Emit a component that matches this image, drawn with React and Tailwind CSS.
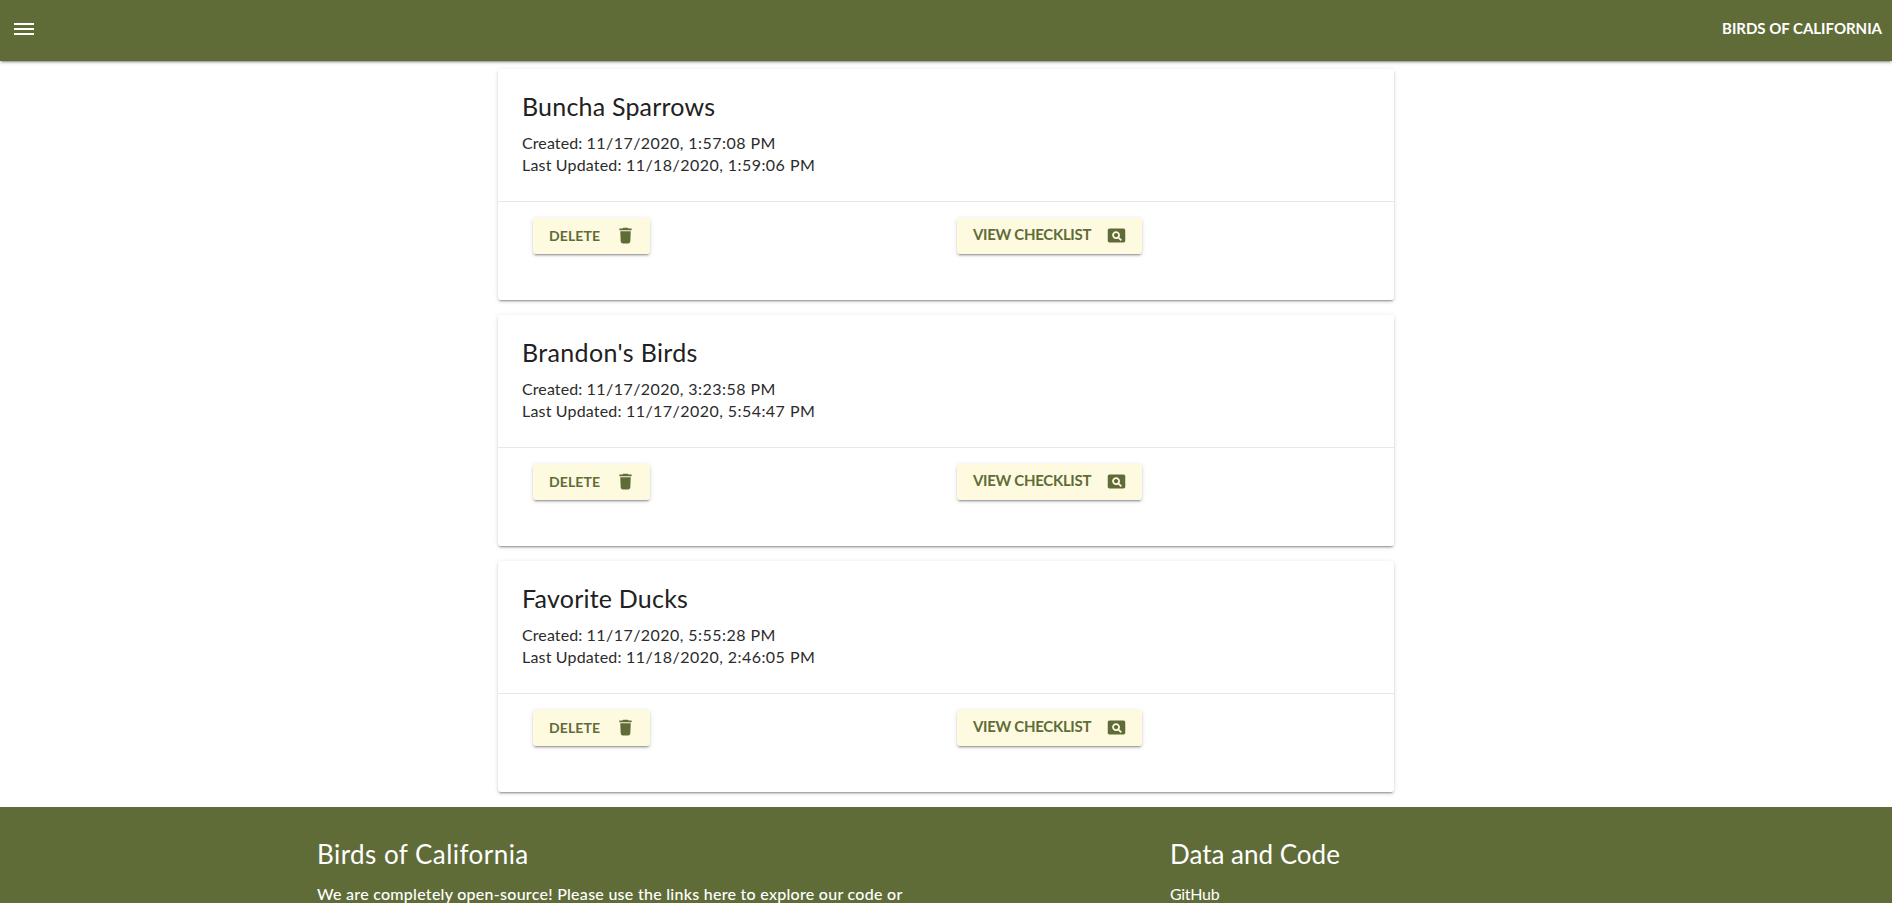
const checklists = [
  { name: "Buncha Sparrows", created: "11/17/2020, 1:57:08 PM", updated: "11/18/2020, 1:59:06 PM", tracking: "tracking-[0.2px]" },
  { name: "Brandon's Birds", created: "11/17/2020, 3:23:58 PM", updated: "11/17/2020, 5:54:47 PM", tracking: "tracking-[0.35px]" },
  { name: "Favorite Ducks", created: "11/17/2020, 5:55:28 PM", updated: "11/18/2020, 2:46:05 PM", tracking: "tracking-[0.22px]" },
];

const raised =
  "shadow-[0_3px_1px_-2px_rgba(0,0,0,0.2),0_2px_2px_0_rgba(0,0,0,0.14),0_1px_5px_0_rgba(0,0,0,0.12)]";

function Icon({ d, className }) {
  return (
    <svg viewBox="0 0 24 24" fill="currentColor" className={className}>
      <path d={d} />
    </svg>
  );
}

function Card({ name, created, updated, tracking }) {
  return (
    <article className={`h-[231px] rounded-[3px] bg-white ${raised}`}>
      <div className="h-[133px] border-b border-[#e8e8e8] pl-6 pt-[21px]">
        <h2 className={`text-[25px] leading-8 text-[#212121] ${tracking}`}>{name}</h2>
        <div className="mt-[10px] text-base leading-[22px] tracking-[0.45px] text-[#2b2b2b]">
          <p><span className="tracking-[0.1px]">Created: </span>{created}</p>
          <p><span className="tracking-[0.18px]">Last Updated: </span>{updated}</p>
        </div>
      </div>
      <div className="grid grid-cols-[424px_1fr] pl-[35px] pt-4 text-[#606c38]">
        <div>
          <button className={`flex h-9 w-[117px] items-center rounded-[3px] bg-[#fefae0] pl-4 text-sm font-bold tracking-[0.1px] ${raised}`}>
            <span className="w-[65.5px] text-left">DELETE</span>
            <Icon className="mb-px size-[21px]" d="M6.5 18.5c0 1.4 1.1 2.5 2.5 2.5h6c1.4 0 2.5-1.1 2.5-2.5L18 7H6l.5 11.5zM19 4h-3.5l-1-1h-5l-1 1H5v2h14V4z" />
          </button>
        </div>
        <div>
          <button className={`flex h-9 w-[185px] items-center rounded-[3px] bg-[#fefae0] pl-4 text-[15px] font-bold tracking-[-0.3px] ${raised}`}>
            <span className="w-[132.5px] whitespace-nowrap pb-[3px] text-left">VIEW CHECKLIST</span>
            <Icon className="mb-px size-[21px]" d="M11.5 9C10.12 9 9 10.12 9 11.5s1.12 2.5 2.5 2.5 2.5-1.12 2.5-2.5S12.88 9 11.5 9zM20 4H4c-1.1 0-2 .9-2 2v12c0 1.1.9 2 2 2h16c1.1 0 2-.9 2-2V6c0-1.1-.9-2-2-2zm-3.21 14.21l-2.91-2.91c-.69.44-1.51.7-2.39.7C9.01 16 7 13.99 7 11.5S9.01 7 11.5 7 16 9.01 16 11.5c0 .88-.26 1.69-.7 2.39l2.91 2.9-1.42 1.42z" />
          </button>
        </div>
      </div>
    </article>
  );
}

export default function App() {
  return (
    <div className="flex h-[903px] flex-col overflow-hidden bg-white font-[Lato,sans-serif]">
      <header className={`z-10 flex h-[61px] shrink-0 items-center justify-between bg-[#606c38] pb-[3px] pl-3 pr-[10px] text-white ${raised}`}>
        <button aria-label="Menu">
          <Icon className="size-6" d="M2 18h20v-2H2v2zm0-5h20v-2H2v2zm0-7v2h20V6H2z" />
        </button>
        <span className="pb-px text-[15px] font-bold tracking-[-0.02px]">BIRDS OF CALIFORNIA</span>
      </header>
      <main className="mx-auto flex w-[896px] shrink-0 flex-col gap-[15px] pb-[15px] pt-2">
        {checklists.map((c) => (
          <Card key={c.name} {...c} />
        ))}
      </main>
      <footer className="grid h-[200px] shrink-0 grid-cols-[853px_1fr] bg-[#606c38] pl-[317px] pt-[31px] text-white">
        <section>
          <h2 className="text-[26px] leading-8 tracking-[0.45px]">Birds of California</h2>
          <p className="mt-3 w-[620px] whitespace-nowrap text-base font-medium leading-6 tracking-[0.27px]">
            We are completely open-source! Please use the links here to explore our code or
          </p>
        </section>
        <section>
          <h2 className="text-[26px] leading-8 tracking-[0px]">Data and Code</h2>
          <p className="mt-3 text-base leading-6 tracking-[-0.3px]">GitHub</p>
        </section>
      </footer>
    </div>
  );
}
